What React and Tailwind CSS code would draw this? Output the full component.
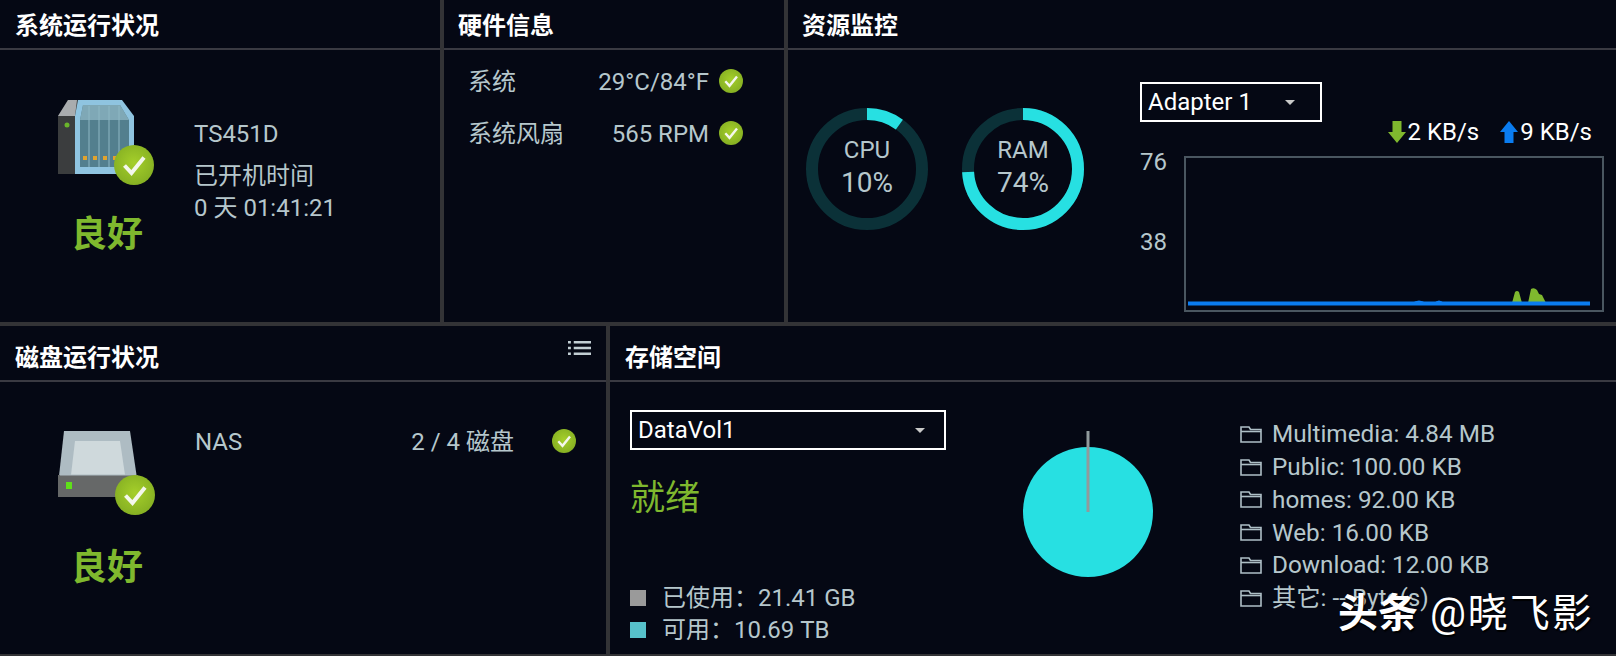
import React from 'react';

const Check = ({ className }) => (
  <svg viewBox="0 0 40 40" className={className}>
    <defs>
      <radialGradient id="chk" cx="50%" cy="45%" r="60%">
        <stop offset="0%" stopColor="#a5cf2a" />
        <stop offset="100%" stopColor="#83ad22" />
      </radialGradient>
    </defs>
    <circle cx="20" cy="20" r="20" fill="url(#chk)" />
    <path d="M10.5 20.5 L17.5 28 L30 12.5" fill="none" stroke="#f4f7ec" strokeWidth="4" />
  </svg>
);

const NasIcon = () => (
  <svg viewBox="0 0 76 74" className="w-[76px] h-[74px]">
    <path d="M0 16 L10 0 L20 0 L18 74 L0 74 Z" fill="#3b3d3e" />
    <path d="M0 16 L10 0 L19 0 L17 16 Z" fill="#a9acae" />
    <path d="M17 16 L20 0 L64 0 L76 16 L76 74 L17 74 Z" fill="#8fc4e0" />
    <path d="M22 20 L25 5 L62 5 L71 20 L71 67 L22 67 Z" fill="#537f8e" />
    <path d="M22 20 L25 5 L62 5 L71 20 Z" fill="#7fa8b6" />
    <path d="M31 6 V67 M41 6 V67 M51 6 V67 M61 6 V67" stroke="#8fb8c4" strokeWidth="1" />
    <circle cx="9" cy="25" r="2.5" fill="#6ab52b" />
    <rect x="25" y="56" width="4" height="4" fill="#e0a32e" />
    <rect x="35" y="56" width="4" height="4" fill="#e0a32e" />
    <rect x="45" y="56" width="4" height="4" fill="#e0a32e" />
    <rect x="55" y="56" width="4" height="4" fill="#e0a32e" />
  </svg>
);

const DiskIcon = () => (
  <svg viewBox="0 0 80 66" className="w-[80px] h-[66px]">
    <path d="M6 0 L72 0 L80 54 L0 54 Z" fill="#aebcc3" />
    <path d="M17 10 L62 10 L67 44 L13 44 Z" fill="#cfd9dc" />
    <rect x="0" y="44" width="80" height="22" fill="#666868" />
    <path d="M2 44 H78" stroke="#aebcc3" strokeWidth="1" />
    <rect x="8" y="51" width="6" height="7" fill="#5fe01a" />
  </svg>
);

const Ring = ({ label, value, pct }) => {
  const r = 55;
  const c = 2 * Math.PI * r;
  return (
    <div className="relative w-[122px] h-[122px]">
      <svg viewBox="0 0 122 122" className="w-[122px] h-[122px] -rotate-90">
        <circle cx="61" cy="61" r={r} fill="none" stroke="#0b3138" strokeWidth="12" />
        <circle cx="61" cy="61" r={r} fill="none" stroke="#27e0e2" strokeWidth="12" strokeDasharray={`${(c * pct) / 100} ${c}`} />
      </svg>
      <div className="absolute inset-0 flex flex-col items-center justify-center pb-[6px] text-[#b6c7cc]">
        <div className="text-[24px] leading-[34px]">{label}</div>
        <div className="text-[28px] leading-[32px]">{value}</div>
      </div>
    </div>
  );
};

const Folder = () => (
  <svg viewBox="0 0 22 17" className="w-[22px] h-[17px] shrink-0" fill="none" stroke="#aebfc6" strokeWidth="1.6">
    <path d="M1 16 V1 H9 L10.5 3.5 H21 V16 Z" />
    <path d="M1 5.5 H21" />
  </svg>
);

const Select = ({ label, className, caretClass }) => (
  <div className={`flex items-center border-2 border-white text-white text-[24px] leading-none pl-[6px] ${className}`}>
    <span>{label}</span>
    <span className={`w-0 h-0 border-x-[5px] border-x-transparent border-t-[5px] border-t-[#c9c9c9] ${caretClass}`} />
  </div>
);

const Header = ({ title, className = '', children }) => (
  <div className={`flex justify-between border-b-2 border-[#3a3a42] pr-[17px] ${className}`}>
    <div className="text-white font-bold text-[24px] leading-none">{title}</div>
    {children}
  </div>
);

const shares = [
  'Multimedia: 4.84 MB',
  'Public: 100.00 KB',
  'homes: 92.00 KB',
  'Web: 16.00 KB',
  'Download: 12.00 KB',
  '其它: -- Byte(s)',
];

export default function App() {
  return (
    <div className="relative w-[1616px] h-[656px] overflow-hidden flex flex-col bg-[#333336] text-[#b6c7cc] font-['Roboto','Noto_Sans_CJK_SC',sans-serif]">
      {/* top row */}
      <div className="flex h-[322px] gap-[4px] shrink-0">
        <section className="w-[440px] bg-[#050814]">
          <Header title="系统运行状况" className="h-[50px] pt-[14px] pl-[15px]" />
          <div className="flex pt-[50px] pl-[58px]">
            <div className="w-[136px]">
              <div className="relative w-[76px] h-[74px]">
                <NasIcon />
                <Check className="absolute left-[56px] top-[45px] w-[40px] h-[40px]" />
              </div>
              <div className="text-[#7fb82e] text-[36px] leading-none font-bold mt-[43px] pl-[13px]">良好</div>
            </div>
            <div className="text-[24px] pt-[21px]">
              <div className="leading-[26px]">TS451D</div>
              <div className="leading-[30px] mt-[14px]">已开机时间</div>
              <div className="leading-[32px] mt-[1px]">0 天 01:41:21</div>
            </div>
          </div>
        </section>
        <section className="w-[340px] bg-[#050814]">
          <Header title="硬件信息" className="h-[50px] pt-[14px] pl-[14px]" />
          <div className="pl-[24px] pr-[41px] pt-[17px] text-[24px]">
            <div className="flex items-center h-[30px]">
              <span className="flex-1">系统</span>
              <span>29°C/84°F</span>
              <Check className="w-[24px] h-[24px] ml-[10px] mt-[-2px]" />
            </div>
            <div className="flex items-center h-[30px] mt-[22px]">
              <span className="flex-1">系统风扇</span>
              <span>565 RPM</span>
              <Check className="w-[24px] h-[24px] ml-[10px] mt-[-2px]" />
            </div>
          </div>
        </section>
        <section className="flex-1 bg-[#050814]">
          <Header title="资源监控" className="h-[50px] pt-[14px] pl-[14px]" />
          <div className="flex">
            <div className="flex gap-[34px] pl-[18px] pt-[58px]">
              <Ring label="CPU" value="10%" pct={10} />
              <Ring label="RAM" value="74%" pct={74} />
            </div>
            <div className="ml-[56px] pt-[32px] w-[464px]">
              <Select label="Adapter 1" className="w-[182px] h-[40px]" caretClass="ml-[33px]" />
              <div className="flex justify-end items-center text-white text-[24px] leading-none pr-[12px] mt-[-2px] h-[24px]">
                <svg viewBox="0 0 18 22" className="w-[18px] h-[22px] mr-[2px]"><path d="M4.5 0 H13.5 V11 H18 L9 22 L0 11 H4.5 Z" fill="#7fb82e" /></svg>
                <span>2 KB/s</span>
                <svg viewBox="0 0 18 22" className="w-[18px] h-[22px] ml-[21px] mr-[2px]"><path d="M4.5 22 H13.5 V11 H18 L9 0 L0 11 H4.5 Z" fill="#0a7cf0" /></svg>
                <span>9 KB/s</span>
              </div>
              <div className="flex mt-[12px]">
                <div className="w-[44px] text-[24px] h-[156px] flex flex-col">
                  <span className="leading-[26px] mt-[-7px]">76</span>
                  <span className="leading-[26px] mt-[54px]">38</span>
                </div>
                <div className="w-[420px] h-[156px] border-2 border-[#4a5660]">
                  <svg viewBox="0 0 416 152" className="w-[416px] h-[152px]">
                    <path d="M326 145 L329 134 Q331 132 333 134 L336 145 Z M342 145 L345 131 Q348 129 351 132 L353 136 L356 137 L360 145 Z" fill="#7fb82e" />
                    <path d="M226 145 Q233 140 240 145 Z M248 145 Q253 140 258 145 Z" fill="#0a7cf0" />
                    <rect x="2" y="143.5" width="402" height="4" fill="#0a7cf0" />
                  </svg>
                </div>
              </div>
            </div>
          </div>
        </section>
      </div>

      {/* bottom row */}
      <div className="flex flex-1 gap-[4px] mt-[4px] mb-[2px]">
        <section className="w-[606px] bg-[#050814]">
          <Header title="磁盘运行状况" className="h-[56px] pt-[20px] pl-[15px]">
            <svg viewBox="0 0 24 16" className="w-[23px] h-[16px] mt-[-6px] mr-[-2px]" stroke="#c2ced3" strokeWidth="2.4">
              <path d="M0 2 H3 M0 8 H3 M0 14 H3 M6 2 H24 M6 8 H24 M6 14 H24" />
            </svg>
          </Header>
          <div className="flex pt-[49px] pl-[58px]">
            <div className="w-[137px]">
              <div className="relative w-[80px] h-[66px]">
                <DiskIcon />
                <Check className="absolute left-[57px] top-[44px] w-[40px] h-[40px]" />
              </div>
              <div className="text-[#7fb82e] text-[36px] leading-none font-bold mt-[53px] pl-[13px]">良好</div>
            </div>
            <div className="flex-1 flex items-center h-[30px] text-[24px] pr-[30px] mt-[-4px]">
              <span className="flex-1">NAS</span>
              <span>2 / 4 磁盘</span>
              <Check className="w-[24px] h-[24px] ml-[38px] mt-[-2px]" />
            </div>
          </div>
        </section>
        <section className="flex-1 bg-[#050814]">
          <Header title="存储空间" className="h-[56px] pt-[20px] pl-[15px]" />
          <div className="flex">
            <div className="pl-[20px] pt-[28px] w-[336px]">
              <Select label="DataVol1" className="w-[316px] h-[40px]" caretClass="ml-[180px]" />
              <div className="text-[#7fb82e] text-[35px] leading-none mt-[31px]">就绪</div>
              <div className="mt-[66px] text-[24px]">
                <div className="flex items-center h-[32px]">
                  <span className="w-[16px] h-[16px] bg-[#9a9a9a] mr-[16px]" />
                  已使用：21.41 GB
                </div>
                <div className="flex items-center h-[32px]">
                  <span className="w-[16px] h-[16px] bg-[#57c1cb] mr-[16px]" />
                  可用：10.69 TB
                </div>
              </div>
            </div>
            <div className="ml-[77px] pt-[49px] w-[130px] shrink-0">
              <svg viewBox="0 0 130 146" className="w-[130px] h-[146px]">
                <circle cx="65" cy="81" r="65" fill="#27e0e2" />
                <rect x="63.5" y="0" width="3" height="81" fill="#909a9c" />
              </svg>
            </div>
            <div className="ml-[87px] pt-[36px] text-[24.3px] whitespace-nowrap">
              {shares.map((s) => (
                <div key={s} className="flex items-center gap-[10px] h-[32.8px]">
                  <Folder />
                  <span>{s}</span>
                </div>
              ))}
            </div>
          </div>
        </section>
      </div>

      {/* watermark */}
      <div className="absolute left-[1338px] top-[592px] text-white text-[40px] leading-[44px] whitespace-nowrap [text-shadow:1px_2px_1px_#000]">
        <span className="font-bold">头条</span><span className="tracking-[2px]"> @晓飞影</span>
      </div>
    </div>
  );
}
